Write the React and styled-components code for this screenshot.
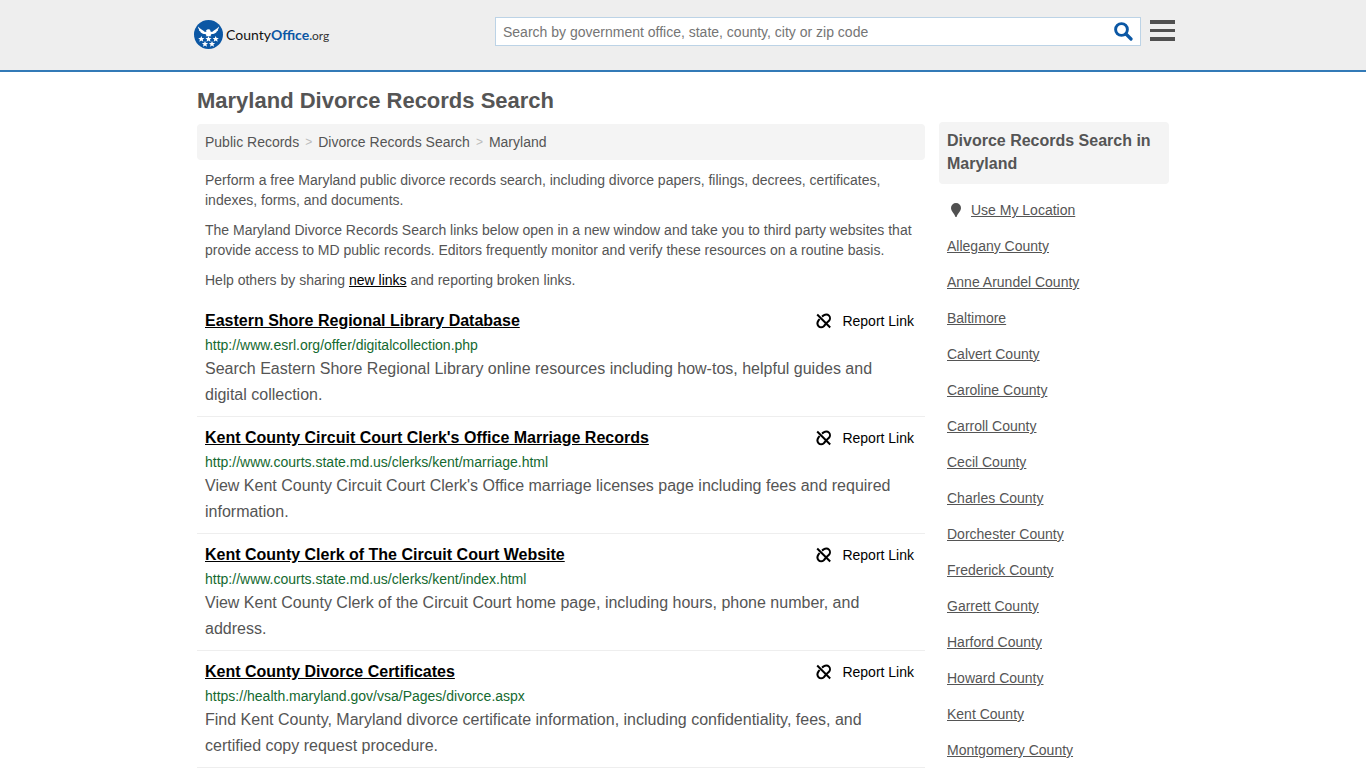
import React from 'react';
import styled, { createGlobalStyle } from 'styled-components';

const RESULTS = [
  {
    title: 'Eastern Shore Regional Library Database',
    url: 'http://www.esrl.org/offer/digitalcollection.php',
    text: 'Search Eastern Shore Regional Library online resources including how-tos, helpful guides and digital collection.',
  },
  {
    title: "Kent County Circuit Court Clerk's Office Marriage Records",
    url: 'http://www.courts.state.md.us/clerks/kent/marriage.html',
    text: "View Kent County Circuit Court Clerk's Office marriage licenses page including fees and required information.",
  },
  {
    title: 'Kent County Clerk of The Circuit Court Website',
    url: 'http://www.courts.state.md.us/clerks/kent/index.html',
    text: 'View Kent County Clerk of the Circuit Court home page, including hours, phone number, and address.',
  },
  {
    title: 'Kent County Divorce Certificates',
    url: 'https://health.maryland.gov/vsa/Pages/divorce.aspx',
    text: 'Find Kent County, Maryland divorce certificate information, including confidentiality, fees, and certified copy request procedure.',
  },
];

const PLACES = [
  'Allegany County',
  'Anne Arundel County',
  'Baltimore',
  'Calvert County',
  'Caroline County',
  'Carroll County',
  'Cecil County',
  'Charles County',
  'Dorchester County',
  'Frederick County',
  'Garrett County',
  'Harford County',
  'Howard County',
  'Kent County',
  'Montgomery County',
];

const STARS = [[7.3, 19], [14.5, 19], [21.7, 19], [11, 24], [18, 24]];

const Emblem = () => (
  <svg width="29" height="29" viewBox="0 0 29 29" aria-hidden="true">
    <circle cx="14.5" cy="14.5" r="14.5" fill="#0b57a4" />
    <path
      fill="#fff"
      d="M4.200 6.600C5.500 9 8.600 9.600 11 12l1.600-.4-.6-1.200c.8-.8 1.500-1.200 2.500-1.200.9 0 1.600.4 2.200 1.200l-.9.4.9.800L18 12c2.400-2.400 5.500-3 6.800-5.400.2 1.300-.3 2.300-1.200 3l.6.100c-.4 1-1 1.500-1.900 1.800l.6.200c-1.300 1.400-3.100 2.200-5.200 2.400l-1.200 1.200.8 1h-5.600l.8-1-1.200-1.200c-2.100-.2-3.900-1-5.200-2.400l.6-.2c-.9-.3-1.500-.8-1.900-1.800l.6-.1c-.9-.7-1.400-1.700-1.200-3z"
    />
    {STARS.map(([x, y]) => (
      <path
        key={`${x}-${y}`}
        fill="#fff"
        transform={`translate(${x} ${y})`}
        d="M0-3.100.9-1 3.100-.9 1.400.5 2 2.700 0 1.400-2 2.700-1.400.5-3.100-.9-.9-1z"
      />
    ))}
  </svg>
);

const BrokenLink = () => (
  <svg width="16" height="16" viewBox="0 0 16 16" aria-hidden="true">
    <path
      d="M1.200 1.500l13 13M6 3.600L7.600 2.400C9.500 1.200 11.700 1.300 13 2.600s1.300 3.700 0 5.200L10.800 9.700M3.600 6L2.400 7.600C1.200 9.500 1.300 11.900 2.600 13.200s3.700 1.300 5.200 0L9.700 11"
      fill="none"
      stroke="#000"
      strokeWidth="2"
    />
  </svg>
);

const App = () => {
  return <>
    <GlobalStyle />
    <Header>
      <HeaderInner>
        <Logo href="#home">
          <Emblem />
          <LogoText>County<b>Office</b><small><b>.</b>org</small></LogoText>
        </Logo>
        <HeaderTools>
          <SearchForm role="search">
            <SearchInput
              type="text"
              aria-label="Search"
              placeholder="Search by government office, state, county, city or zip code"
            />
            <SearchButton type="button" aria-label="Submit search">
              <svg width="19" height="19" viewBox="0 0 19 19" aria-hidden="true">
                <circle cx="7.500" cy="7.500" r="5.900" fill="none" stroke="#0b57a4" strokeWidth="2.900" />
                <path d="M12 12l5 5" stroke="#0b57a4" strokeWidth="3.200" strokeLinecap="round" />
              </svg>
            </SearchButton>
          </SearchForm>
          <MenuButton type="button" aria-label="Menu">
            <svg width="25" height="22" viewBox="0 0 25 22" aria-hidden="true">
              <path d="M0 0h25v4H0zM0 9h25v3H0zM0 17h25v4H0z" fill="#505050" />
            </svg>
          </MenuButton>
        </HeaderTools>
      </HeaderInner>
    </Header>

    <Page>
      <Main>
        <PageTitle>Maryland Divorce Records Search</PageTitle>
        <Breadcrumbs aria-label="Breadcrumb">
          <a href="#records">Public Records</a>
          <span>&gt;</span>
          <a href="#divorce">Divorce Records Search</a>
          <span>&gt;</span>
          <a href="#maryland">Maryland</a>
        </Breadcrumbs>
        <Intro>
          <p>
            Perform a free Maryland public divorce records search, including divorce papers,
            filings, decrees, certificates, indexes, forms, and documents.
          </p>
          <p>
            The Maryland Divorce Records Search links below open in a new window and take you to
            third party websites that provide access to MD public records. Editors frequently
            monitor and verify these resources on a routine basis.
          </p>
          <p>
            Help others by sharing <a href="#new">new links</a> and reporting broken links.
          </p>
        </Intro>
        {RESULTS.map((item) => (
          <Result key={item.url}>
            <ResultHead>
              <ResultTitle><a href={item.url}>{item.title}</a></ResultTitle>
              <ReportLink href="#report">
                <BrokenLink />
                Report Link
              </ReportLink>
            </ResultHead>
            <ResultUrl>{item.url}</ResultUrl>
            <ResultText>{item.text}</ResultText>
          </Result>
        ))}
      </Main>

      <Sidebar>
        <SidebarTitle>Divorce Records Search in Maryland</SidebarTitle>
        <PlaceList>
          <li>
            <PinIcon width="10" height="14" viewBox="0 0 10 14" aria-hidden="true">
              <path d="M5 0a5 5 0 0 1 5 5c0 3-3.300 5.300-4.200 8.500q-.8 1-1.600 0C3.300 10.300 0 8 0 5a5 5 0 0 1 5-5z" fill="#505050" />
            </PinIcon>
            <a href="#location">Use My Location</a>
          </li>
          {PLACES.map((place) => (
            <li key={place}><a href="#place">{place}</a></li>
          ))}
        </PlaceList>
      </Sidebar>
    </Page>
  </>
}


export default App;

const GlobalStyle = createGlobalStyle`
  * {
    box-sizing: border-box;
  }

  body {
    margin: 0;
    background: #fff;
    color: #555;
    font-family: "Liberation Sans", Arial, sans-serif;
    font-size: 14px;
    line-height: 20px;
  }

  a {
    color: inherit;
  }
`;

const Header = styled.header`
  background: #eee;
  border-bottom: 2px solid #337ab7;
`;

const HeaderInner = styled.div`
  display: flex;
  align-items: flex-start;
  justify-content: space-between;

  max-width: 984px;
  height: 70px;
  margin: 0 auto;
`;

const Logo = styled.a`
  display: flex;
  align-items: center;
  gap: 3px;

  margin: 20px 0 0 3px;
  text-decoration: none;
`;

const LogoText = styled.span`
  padding-top: 2px;

  color: #111;
  font-family: Lato, sans-serif;
  font-size: 14px;

  b {
    color: #0b57a4;
  }

  small {
    color: #333;
    font-size: 12px;
    font-weight: 400;
  }
`;

const HeaderTools = styled.div`
  display: flex;
  flex: 0 1 680px;
  gap: 9px;

  margin-top: 17px;
`;

const SearchForm = styled.form`
  display: flex;
  flex: 1;

  height: 29px;

  background: #fff;
  border: 1px solid #bcd3e6;
`;

const SearchInput = styled.input`
  flex: 1;
  min-width: 0;
  padding: 0 7px;

  background: none;
  border: 0;
  color: #555;
  font: inherit;

  &::placeholder {
    color: #757575;
    opacity: 1;
  }
`;

const SearchButton = styled.button`
  display: flex;
  align-items: center;
  justify-content: center;

  width: 34px;
  padding: 0;

  background: none;
  border: 0;
  cursor: pointer;
`;

const MenuButton = styled.button`
  display: flex;
  align-items: center;

  height: 28px;
  padding: 0;

  background: none;
  border: 0;
  cursor: pointer;
`;

const Page = styled.div`
  display: flex;
  align-items: flex-start;
  gap: 14px;

  max-width: 972px;
  margin: 0 auto;
`;

const Main = styled.main`
  flex: 1;
  min-width: 0;
`;

const PageTitle = styled.h1`
  margin: 15px 0 9px;

  font-size: 22px;
  line-height: 28px;
`;

const Breadcrumbs = styled.nav`
  display: flex;
  gap: 6px;

  padding: 8px;

  background: #f4f4f4;
  border-radius: 4px;

  a {
    text-decoration: none;
  }

  span {
    color: #bbb;
    font-size: 12px;
  }
`;

const Intro = styled.div`
  padding: 0 8px;

  p {
    margin: 10px 0;
  }

  a {
    color: #000;
  }
`;

const Result = styled.article`
  padding: 9px 8px 8px;

  border-bottom: 1px solid #eee;
`;

const ResultHead = styled.div`
  display: flex;
  justify-content: space-between;

  margin-bottom: 2px;
`;

const ResultTitle = styled.h2`
  margin: 0;

  color: #000;
  font-size: 16px;
  line-height: 24px;
`;

const ReportLink = styled.a`
  display: flex;
  align-items: center;
  gap: 10px;

  margin-right: 3px;

  color: #000;
  text-decoration: none;
`;

const ResultUrl = styled.div`
  color: #14692f;
`;

const ResultText = styled.p`
  margin: 1px 0 0;

  font-size: 16px;
  line-height: 26px;
`;

const Sidebar = styled.aside`
  flex: 0 0 230px;

  margin-top: 50px;
`;

const SidebarTitle = styled.h2`
  margin: 0;
  padding: 7px 8px 9px;

  background: #f4f4f4;
  border-radius: 4px;
  font-size: 16px;
  line-height: 23px;
`;

const PlaceList = styled.ul`
  margin: 8px 0 0;
  padding: 0 8px;

  list-style: none;

  li {
    display: flex;
    align-items: center;

    height: 36px;
  }
`;

const PinIcon = styled.svg`
  margin: 0 10px 0 4px;
`;
